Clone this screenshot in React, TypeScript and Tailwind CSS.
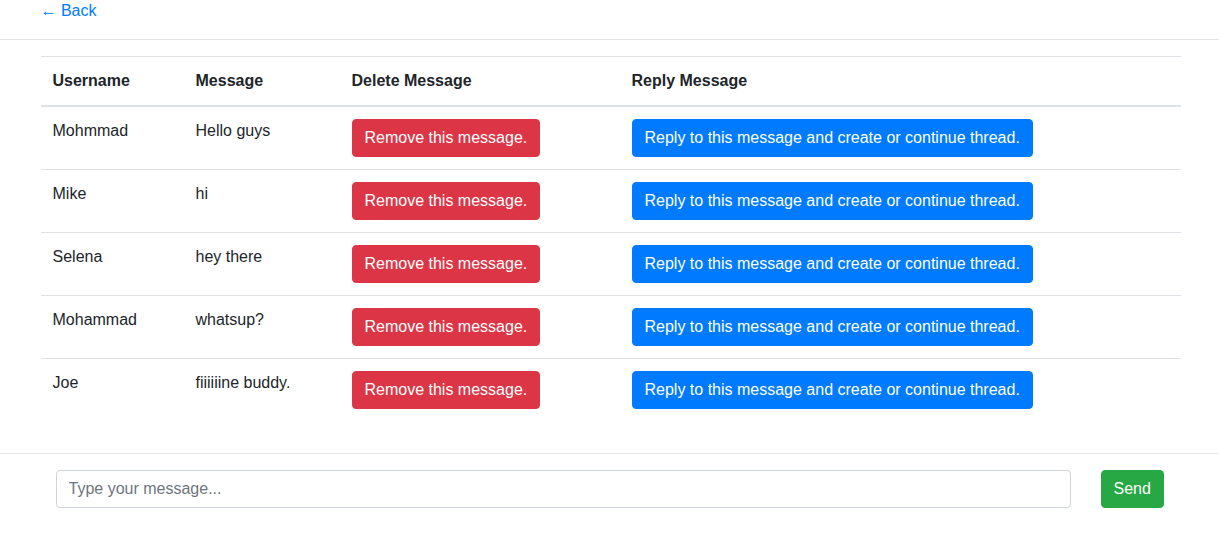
const messages = [
  { user: "Mohmmad", text: "Hello guys" },
  { user: "Mike", text: "hi" },
  { user: "Selena", text: "hey there" },
  { user: "Mohammad", text: "whatsup?" },
  { user: "Joe", text: "fiiiiiine buddy." },
];

const container = "mx-auto max-w-[1142px] pl-0.5";
const button =
  "whitespace-nowrap rounded border px-3 py-1.5 text-base leading-6 text-white cursor-pointer";

export default function App() {
  return (
    <div className="bg-white font-['Liberation_Sans',Arial,sans-serif] text-base leading-6 text-[#212529]">
      <nav className={`${container} -mt-px`}>
        <a href="#" className="text-[#007bff] hover:underline">
          ← Back
        </a>
      </nav>
      <hr className="my-4 border-t border-black/10" />
      <main className={container}>
        <table className="mb-4 w-full border-collapse text-left">
          <thead>
            <tr className="border-t border-b-2 border-t-[#dee2e6] border-b-[#dee2e6]">
              <th className="w-[143px] p-3 font-bold">Username</th>
              <th className="w-[156px] p-3 font-bold">Message</th>
              <th className="w-[280px] p-3 font-bold">Delete Message</th>
              <th className="p-3 font-bold">Reply Message</th>
            </tr>
          </thead>
          <tbody>
            {messages.map((m) => (
              <tr key={m.user} className="border-t border-[#dee2e6] align-top">
                <td className="p-3">{m.user}</td>
                <td className="p-3">{m.text}</td>
                <td className="p-3">
                  <button type="button" className={`${button} block border-[#dc3545] bg-[#dc3545]`}>
                    Remove this message.
                  </button>
                </td>
                <td className="p-3">
                  <button type="button" className={`${button} block border-[#007bff] bg-[#007bff]`}>
                    Reply to this message and create or continue thread.
                  </button>
                </td>
              </tr>
            ))}
          </tbody>
        </table>
      </main>
      <hr className="mt-8 mb-4 border-t border-black/10" />
      <div className={container}>
        <form
          className="grid grid-cols-[1fr_65px] gap-[30px] px-[15px]"
          onSubmit={(e) => e.preventDefault()}
        >
          <input
            type="text"
            aria-label="Message"
            placeholder="Type your message..."
            className="w-full min-w-0 rounded border border-[#ced4da] bg-white px-3 py-1.5 text-base leading-6 text-[#495057] placeholder:text-[#6c757d]"
          />
          <button
            type="submit"
            className={`${button} justify-self-start border-[#28a745] bg-[#28a745]`}
          >
            Send
          </button>
        </form>
      </div>
    </div>
  );
}
